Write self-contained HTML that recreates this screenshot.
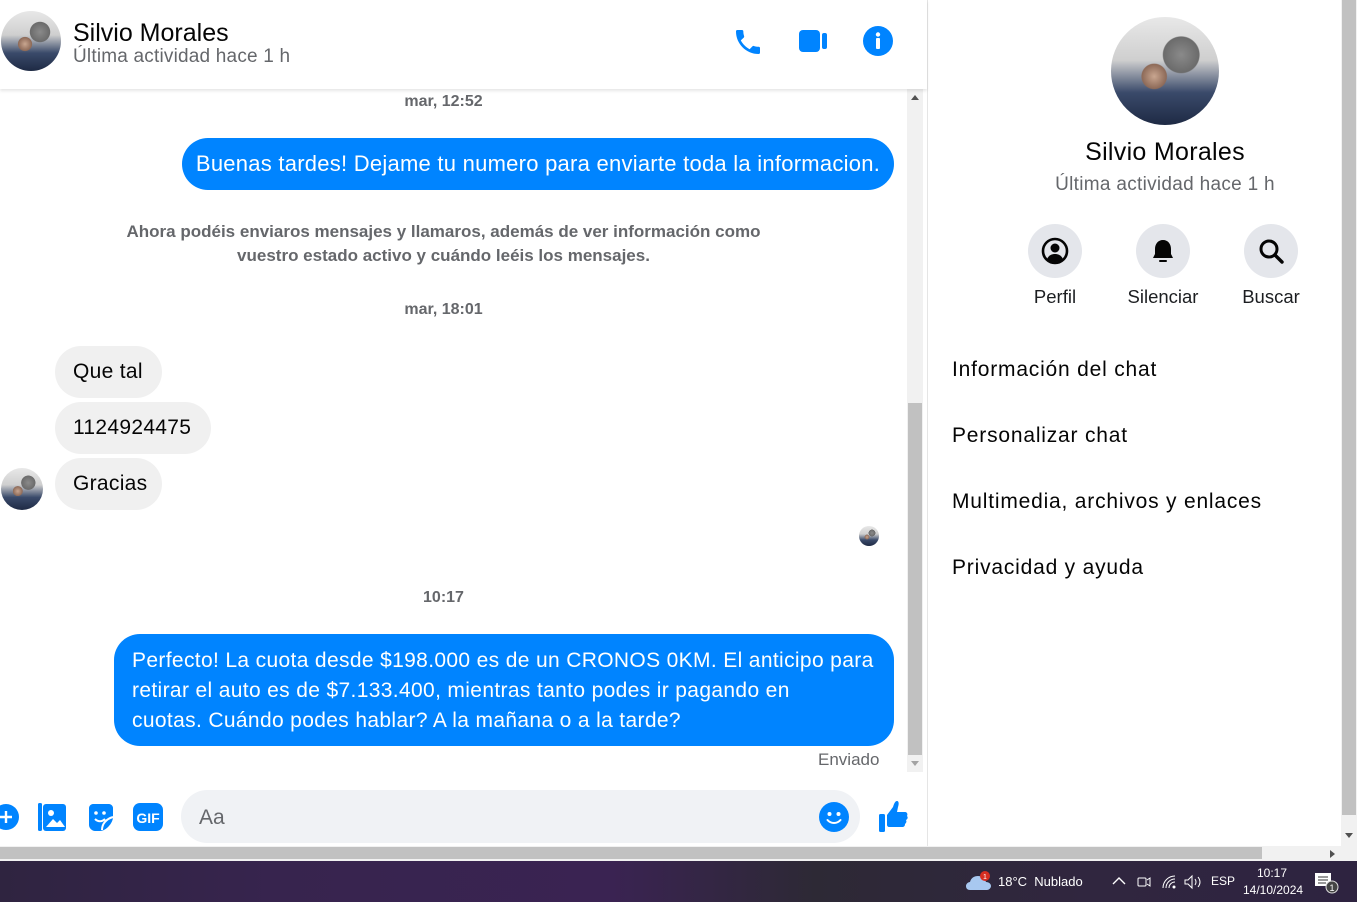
<!DOCTYPE html>
<html><head><meta charset="utf-8"><style>
*{margin:0;padding:0;box-sizing:border-box}
body{width:1357px;height:902px;overflow:hidden;background:#fff;font-family:"Liberation Sans",sans-serif;position:relative;color:#050505}
.a{position:absolute}
.av{position:absolute;border-radius:50%;overflow:hidden;background:radial-gradient(circle at 65% 35%,#8a8a8a 0,#6b6b6b 18%,transparent 19%),radial-gradient(circle at 40% 55%,#c9a690 0,#8d6a58 14%,transparent 15%),linear-gradient(180deg,#e8e8e8 0%,#cfcfcf 40%,#3a4a6a 70%,#1e2a44 100%)}
.ts{position:absolute;width:887px;text-align:center;font-size:16px;color:#65676b;font-weight:bold}
.bl{position:absolute;background:#0084ff;color:#fff;border-radius:26px;font-size:20px}
.gr{position:absolute;background:#f0f0f0;border-radius:26px;font-size:21px;padding:0 18px;line-height:52px;color:#050505;letter-spacing:.3px}
.ic{position:absolute;width:54px;height:54px;border-radius:50%;background:#e4e6eb}
.lbl{position:absolute;font-size:18.5px;color:#1c1e21;text-align:center;width:110px}
.mi{position:absolute;left:952px;font-size:21px;color:#050505;letter-spacing:.8px}
</style></head><body>
<!-- header -->
<div class="a" style="left:0;top:0;width:927px;height:89px;background:#fff;box-shadow:0 2px 3px rgba(0,0,0,.1);z-index:2"></div>
<div class="av" style="left:1px;top:11px;width:60px;height:60px;z-index:3"></div>
<div class="a" style="left:73px;top:19px;font-size:25px;z-index:3">Silvio Morales</div>
<div class="a" style="left:73px;top:46px;font-size:19px;color:#65676b;z-index:3;letter-spacing:.2px">Última actividad hace 1 h</div>
<svg class="a" style="left:732px;top:26px;z-index:3" width="32" height="32" viewBox="0 0 24 24"><path fill="#0084ff" d="M6.6 10.8c1.4 2.8 3.8 5.1 6.6 6.6l2.2-2.2c.3-.3.7-.4 1-.2 1.1.4 2.3.6 3.6.6.6 0 1 .4 1 1V20c0 .6-.4 1-1 1C10.6 21 3 13.4 3 4c0-.6.4-1 1-1h3.5c.6 0 1 .4 1 1 0 1.3.2 2.5.6 3.6.1.3 0 .7-.2 1L6.6 10.8z"/></svg>
<svg class="a" style="left:797px;top:27px;z-index:3" width="32" height="28" viewBox="0 0 32 28"><rect x="2" y="3" width="21" height="22" rx="4" fill="#0084ff"/><rect x="25" y="6" width="5" height="16" rx="2" fill="#0084ff"/></svg>
<svg class="a" style="left:862px;top:25px;z-index:3" width="32" height="32" viewBox="0 0 32 32"><circle cx="16" cy="16" r="15" fill="#0084ff"/><circle cx="16" cy="9.5" r="2.2" fill="#fff"/><rect x="14" y="13" width="4" height="11" rx="1" fill="#fff"/></svg>

<!-- chat scrollbar -->
<div class="a" style="left:907px;top:89px;width:16px;height:683px;background:#f1f1f1"></div>
<div class="a" style="left:908px;top:403px;width:14px;height:352px;background:#c1c1c1"></div>
<div class="a" style="left:911px;top:95px;width:0;height:0;border-left:4px solid transparent;border-right:4px solid transparent;border-bottom:5px solid #505050"></div>
<div class="a" style="left:911px;top:761px;width:0;height:0;border-left:4px solid transparent;border-right:4px solid transparent;border-top:5px solid #a3a3a3"></div>
<div class="a" style="left:927px;top:0;width:1px;height:846px;background:#e5e5e5"></div>

<!-- messages -->
<div class="ts" style="left:0;top:93px">mar, 12:52</div>
<div class="bl" style="left:182px;top:138px;width:712px;height:52px;line-height:52px;text-align:center;white-space:nowrap;font-size:22px;letter-spacing:.25px">Buenas tardes! Dejame tu numero para enviarte toda la informacion.</div>
<div class="ts" style="left:0;top:220px;line-height:24px;font-size:17px">Ahora podéis enviaros mensajes y llamaros, además de ver información como<br>vuestro estado activo y cuándo leéis los mensajes.</div>
<div class="ts" style="left:0;top:301px">mar, 18:01</div>
<div class="gr" style="left:55px;top:346px;width:107px;height:52px">Que tal</div>
<div class="gr" style="left:55px;top:402px;width:156px;height:52px">1124924475</div>
<div class="gr" style="left:55px;top:458px;width:107px;height:52px">Gracias</div>
<div class="av" style="left:1px;top:468px;width:42px;height:42px"></div>
<div class="av" style="left:859px;top:526px;width:20px;height:20px"></div>
<div class="ts" style="left:0;top:589px">10:17</div>
<div class="bl" style="left:114px;top:634px;width:780px;height:112px;padding:12px 18px;line-height:30px;font-size:21px;letter-spacing:.35px;white-space:nowrap">Perfecto! La cuota desde $198.000 es de un CRONOS 0KM. El anticipo para<br>retirar el auto es de $7.133.400, mientras tanto podes ir pagando en<br>cuotas. Cuándo podes hablar? A la mañana o a la tarde?</div>
<div class="a" style="left:818px;top:750px;font-size:17px;color:#65676b">Enviado</div>

<!-- composer -->
<svg class="a" style="left:-8px;top:802px" width="28" height="30" viewBox="0 0 28 30"><circle cx="14" cy="15" r="13" fill="#0084ff"/><path d="M14 9v12M8 15h12" stroke="#fff" stroke-width="2.4"/></svg>
<svg class="a" style="left:37px;top:802px" width="30" height="30" viewBox="0 0 30 30"><rect x="1" y="1" width="4" height="28" rx="1.5" fill="#0084ff"/><rect x="6" y="2" width="23" height="27" rx="3" fill="#0084ff"/><circle cx="14" cy="11" r="3" fill="#fff"/><path d="M9 25l7-8 4 4 3-3 5 7z" fill="#fff"/></svg>
<svg class="a" style="left:86px;top:802px" width="30" height="30" viewBox="0 0 30 30"><path d="M3 6c0-2 2-4 4-4h16c2 0 4 2 4 4v9c0 6-7 14-13 14h-5c-3 0-6-3-6-6z" fill="#0084ff"/><circle cx="10" cy="11" r="1.8" fill="#fff"/><circle cx="18" cy="11" r="1.8" fill="#fff"/><path d="M9 17c3 3 7 3 10 0M16 28c0-6 4-11 11-13" stroke="#fff" stroke-width="2" fill="none"/></svg>
<svg class="a" style="left:133px;top:803px" width="30" height="28" viewBox="0 0 30 28"><rect x="0" y="0" width="30" height="28" rx="7" fill="#0084ff"/><text x="15" y="20" font-family="Liberation Sans" font-weight="bold" font-size="14" fill="#fff" text-anchor="middle">GIF</text></svg>
<div class="a" style="left:181px;top:790px;width:679px;height:53px;border-radius:27px;background:#f0f2f5"></div>
<div class="a" style="left:199px;top:806px;font-size:21px;color:#65676b">Aa</div>
<svg class="a" style="left:819px;top:802px" width="30" height="30" viewBox="0 0 30 30"><circle cx="15" cy="15" r="15" fill="#0084ff"/><circle cx="10.5" cy="12" r="2" fill="#fff"/><circle cx="19.5" cy="12" r="2" fill="#fff"/><path d="M8.5 18c3.5 4 9.5 4 13 0" stroke="#fff" stroke-width="2" fill="none" stroke-linecap="round"/></svg>
<svg class="a" style="left:877px;top:800px" width="34" height="34" viewBox="0 0 34 34"><rect x="2" y="14" width="6" height="18" rx="1.5" fill="#0084ff"/><path d="M10 15l6-8c1-3 2-6 4-6 2 0 2 3 1 6l-1 5h8c2 0 3 2 2 4 1 1 1 3-1 4 1 2 0 3-1 4 0 2-1 3-3 3H12c-1 0-2-1-2-2z" fill="#0084ff"/></svg>

<!-- sidebar -->
<div class="av" style="left:1111px;top:17px;width:108px;height:108px"></div>
<div class="a" style="left:1015px;top:138px;width:300px;text-align:center;font-size:25px;letter-spacing:.3px">Silvio Morales</div>
<div class="a" style="left:1015px;top:174px;width:300px;text-align:center;font-size:19px;color:#65676b;letter-spacing:.3px">Última actividad hace 1 h</div>
<div class="ic" style="left:1028px;top:224px"></div>
<svg class="a" style="left:1040px;top:236px" width="30" height="30" viewBox="0 0 30 30"><circle cx="15" cy="15" r="12" fill="none" stroke="#050505" stroke-width="2.6"/><circle cx="15" cy="12" r="4.5" fill="#050505"/><path d="M7 23c2-4 5-5 8-5s6 1 8 5c-2 2-5 3-8 3s-6-1-8-3z" fill="#050505"/></svg>
<div class="ic" style="left:1136px;top:224px"></div>
<svg class="a" style="left:1148px;top:236px" width="30" height="30" viewBox="0 0 30 30"><path d="M15 4c-5 0-8 4-8 9v5l-2 4h20l-2-4v-5c0-5-3-9-8-9z" fill="#050505"/><rect x="11" y="24" width="8" height="2" rx="1" fill="#050505"/></svg>
<div class="ic" style="left:1244px;top:224px"></div>
<svg class="a" style="left:1256px;top:236px" width="30" height="30" viewBox="0 0 30 30"><circle cx="13" cy="13" r="8" fill="none" stroke="#050505" stroke-width="3"/><path d="M19 19l7 7" stroke="#050505" stroke-width="3.4" stroke-linecap="round"/></svg>
<div class="lbl" style="left:1000px;top:286px">Perfil</div>
<div class="lbl" style="left:1108px;top:286px">Silenciar</div>
<div class="lbl" style="left:1216px;top:286px">Buscar</div>
<div class="mi" style="top:358px">Información del chat</div>
<div class="mi" style="top:424px">Personalizar chat</div>
<div class="mi" style="top:490px">Multimedia, archivos y enlaces</div>
<div class="mi" style="top:556px">Privacidad y ayuda</div>

<!-- right scrollbar -->
<div class="a" style="left:1341px;top:0;width:16px;height:846px;background:#f1f1f1"></div>
<div class="a" style="left:1342px;top:0;width:14px;height:815px;background:#c1c1c1"></div>
<div class="a" style="left:1345px;top:833px;width:0;height:0;border-left:4px solid transparent;border-right:4px solid transparent;border-top:5px solid #505050"></div>

<!-- horizontal scrollbar -->
<div class="a" style="left:0;top:846px;width:1357px;height:15px;background:#f1f1f1"></div>
<div class="a" style="left:0;top:847px;width:1262px;height:12px;background:#c1c1c1"></div>
<div class="a" style="left:1330px;top:850px;width:0;height:0;border-top:4px solid transparent;border-bottom:4px solid transparent;border-left:5px solid #505050"></div>

<!-- taskbar -->
<div class="a" style="left:0;top:861px;width:1357px;height:41px;background:linear-gradient(90deg,#2f2440 0%,#37244e 20%,#3a2352 45%,#2d2935 60%,#30263f 80%,#2e2340 100%)"></div>
<svg class="a" style="left:965px;top:870px" width="28" height="22" viewBox="0 0 28 22"><path d="M5 20c-3 0-4-2-4-4s2-4 4-4c1-4 4-6 8-6 4 0 7 3 8 6 3 0 5 2 5 4s-2 4-4 4z" fill="#a8c8f0"/><circle cx="20" cy="6" r="5" fill="#d62d20"/><text x="20" y="9" font-size="7" fill="#fff" text-anchor="middle" font-family="Liberation Sans">1</text></svg>
<div class="a" style="left:998px;top:874px;font-size:13px;color:#fff">18°C&nbsp; Nublado</div>
<svg class="a" style="left:1112px;top:876px" width="14" height="10" viewBox="0 0 14 10"><path d="M1 8l6-6 6 6" stroke="#fff" stroke-width="1.4" fill="none"/></svg>
<svg class="a" style="left:1137px;top:874px" width="14" height="16" viewBox="0 0 14 16"><rect x="1" y="4" width="8" height="8" rx="1" stroke="#fff" fill="none"/><path d="M10 6l3-2v8l-3-2" stroke="#fff" fill="none"/></svg>
<svg class="a" style="left:1161px;top:874px" width="16" height="16" viewBox="0 0 16 16"><path d="M2 14A12 12 0 0 1 14 2M5 14A9 9 0 0 1 14 5M8 14A6 6 0 0 1 14 8" stroke="#fff" fill="none"/><circle cx="13" cy="13" r="1.5" fill="#fff"/></svg>
<svg class="a" style="left:1183px;top:874px" width="20" height="16" viewBox="0 0 20 16"><path d="M2 6h3l4-4v12l-4-4H2z" stroke="#fff" fill="none"/><path d="M12 5q2 3 0 6M15 3q4 5 0 10" stroke="#fff" fill="none"/></svg>
<div class="a" style="left:1211px;top:874px;font-size:12px;color:#fff">ESP</div>
<div class="a" style="left:1243px;top:865px;font-size:12px;color:#fff;text-align:center;width:58px;line-height:17px">10:17<br>14/10/2024</div>
<svg class="a" style="left:1314px;top:871px" width="26" height="24" viewBox="0 0 26 24"><rect x="1" y="2" width="16" height="13" fill="#fff"/><path d="M4 6h10M4 9h10M4 12h8" stroke="#333" stroke-width="1"/><circle cx="18" cy="16" r="6" fill="#444" stroke="#ddd"/><text x="18" y="20" font-size="9" fill="#fff" text-anchor="middle" font-family="Liberation Sans">1</text></svg>
</body></html>
